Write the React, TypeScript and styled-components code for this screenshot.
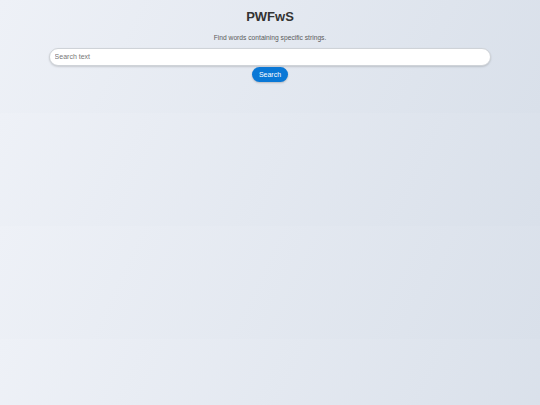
import React, { useState } from 'react';
import styled, { createGlobalStyle } from 'styled-components';

const GlobalStyle = createGlobalStyle`
  html {
    background: linear-gradient(115deg, #eef1f7 0%, #d9e0ea 100%);
  }

  body {
    margin: 0;
    font-family: 'Liberation Sans', Arial, sans-serif;
    color: #333;
  }
`;

const Page = styled.main`
  display: flex;
  flex-direction: column;
  align-items: center;
  padding: 8.5px 0 31px;
`;

const Title = styled.h1`
  margin: 0 0 10px;
  font-size: 13px;
  font-weight: 700;
  color: #333;
`;

const Subtitle = styled.p`
  margin: 0 0 7px;
  font-size: 6.7px;
  color: #5a5a5a;
`;

const SearchForm = styled.form`
  display: flex;
  flex-direction: column;
  align-items: center;
  gap: 1px;
  width: 100%;
`;

const SearchInput = styled.input`
  box-sizing: border-box;
  width: 82%;
  height: 18px;
  padding: 0 5px;
  border: 1px solid #cfd3d8;
  border-radius: 9px;
  background: #fff;
  font-family: inherit;
  font-size: 7px;
  color: #333;
  outline: none;
  box-shadow: 0 1px 2px rgba(0, 0, 0, 0.15);

  &::placeholder {
    color: #777;
  }
`;

const SearchButton = styled.button`
  height: 15px;
  padding: 0 7px;
  border: none;
  border-radius: 8px;
  background: #0a78d6;
  color: #fff;
  font-family: inherit;
  font-size: 7px;
  cursor: pointer;
  box-shadow: 0 1px 2px rgba(0, 0, 0, 0.2);
`;

const App: React.FC = () => {
  const [query, setQuery] = useState('');

  return (
    <>
      <GlobalStyle />
      <Page>
        <Title>PWFwS</Title>
        <Subtitle>Find words containing specific strings.</Subtitle>
        <SearchForm onSubmit={e => e.preventDefault()}>
          <SearchInput
            type="text"
            placeholder="Search text"
            value={query}
            onChange={e => setQuery(e.target.value)}
          />
          <SearchButton type="submit">Search</SearchButton>
        </SearchForm>
      </Page>
    </>
  );
};

export default App;
